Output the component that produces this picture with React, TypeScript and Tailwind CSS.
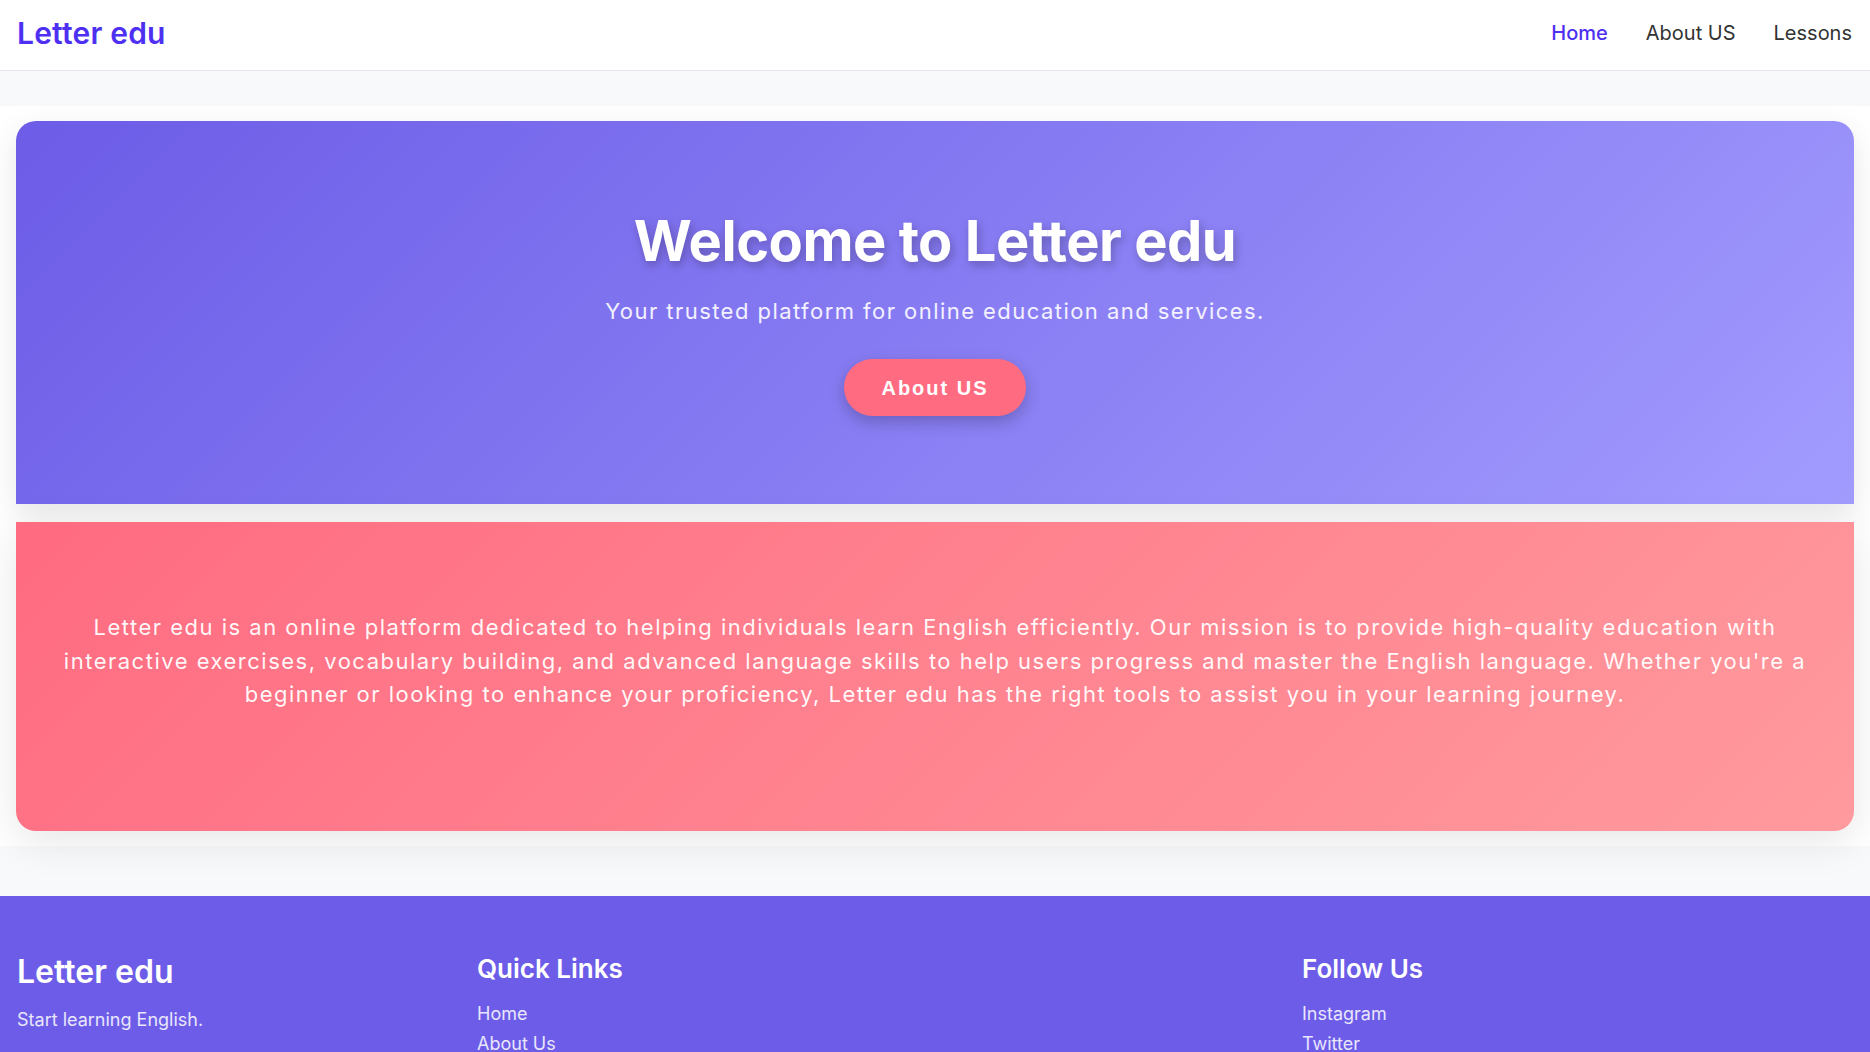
import React from "react";

export default function App() {
  return (
    <div className="min-h-screen bg-[#f8f9fb] font-['Inter',sans-serif]">
      <nav className="flex h-[71px] items-center justify-between border-b border-[#e3e6ee] bg-white pb-[4px] pl-[17px] pr-[18px]">
        <div className="text-[30px] font-semibold leading-none tracking-[0.2px] text-[#4e30f2]">Letter edu</div>
        <ul className="flex items-center gap-[38px] text-[20px] leading-none">
          <li className="font-medium text-[#4e30f2]">Home</li>
          <li className="text-[#333333]">About US</li>
          <li className="text-[#333333]">Lessons</li>
        </ul>
      </nav>

      <main className="pt-[35px]">
        <section className="bg-white px-4 py-[15px]">
          <div className="rounded-t-[20px] bg-[linear-gradient(135deg,#6c5ce7,#a29bfe)] pb-[88px] pt-[87px] text-center shadow-[0_10px_30px_rgba(0,0,0,0.1)]">
            <h1 className="text-[56px] font-bold leading-[1.2] tracking-[-0.5px] text-white [text-shadow:2px_4px_10px_rgba(0,0,0,0.25)]">
              Welcome to Letter edu
            </h1>
            <p className="mt-[20px] text-[22px] leading-[1.5] tracking-[1.45px] text-white/90">
              Your trusted platform for online education and services.
            </p>
            <button className="mt-[31px] inline-flex h-[57px] items-center rounded-full bg-[#ff6b81] px-[37px] font-['Liberation_Sans',sans-serif] text-[20px] font-bold tracking-[2px] text-white shadow-[0_6px_16px_rgba(0,0,0,0.22)]">
              About US
            </button>
          </div>

          <div className="mt-[18px] rounded-b-[20px] bg-[linear-gradient(135deg,#ff6b81,#ff9a9e)] px-[30px] pb-[119px] pt-[89px] text-center shadow-[0_10px_40px_rgba(0,0,0,0.1)]">
            <p className="text-[22px] leading-[33.5px] tracking-[1.5px] text-white/95">
              Letter edu is an online platform dedicated to helping individuals learn English efficiently. Our mission is to provide high-quality education with
              <br />
              interactive exercises, vocabulary building, and advanced language skills to help users progress and master the English language. Whether you're a
              <br />
              beginner or looking to enhance your proficiency, Letter edu has the right tools to assist you in your learning journey.
            </p>
          </div>
        </section>
      </main>

      <footer className="mt-[50px] bg-[#6c5ce7] pb-[40px] pl-[17px] pr-4 pt-[57px] text-white">
        <div className="flex">
          <div className="w-[460px]">
            <h2 className="text-[32px] font-semibold leading-[1.2]">Letter edu</h2>
            <p className="mt-[16px] text-[18px] leading-[1.45] text-white/85">Start learning English.</p>
          </div>
          <div className="w-[825px]">
            <h3 className="text-[26px] font-semibold leading-[1.2]">Quick Links</h3>
            <ul className="mt-[17px] flex flex-col gap-[4px] text-[18px] leading-[26px] text-white/85">
              <li>Home</li>
              <li>About Us</li>
              <li>Lessons</li>
            </ul>
          </div>
          <div className="flex-1">
            <h3 className="text-[26px] font-semibold leading-[1.2]">Follow Us</h3>
            <ul className="mt-[17px] flex flex-col gap-[4px] text-[18px] leading-[26px] text-white/85">
              <li>Instagram</li>
              <li>Twitter</li>
              <li>Facebook</li>
            </ul>
          </div>
        </div>
      </footer>
    </div>
  );
}
